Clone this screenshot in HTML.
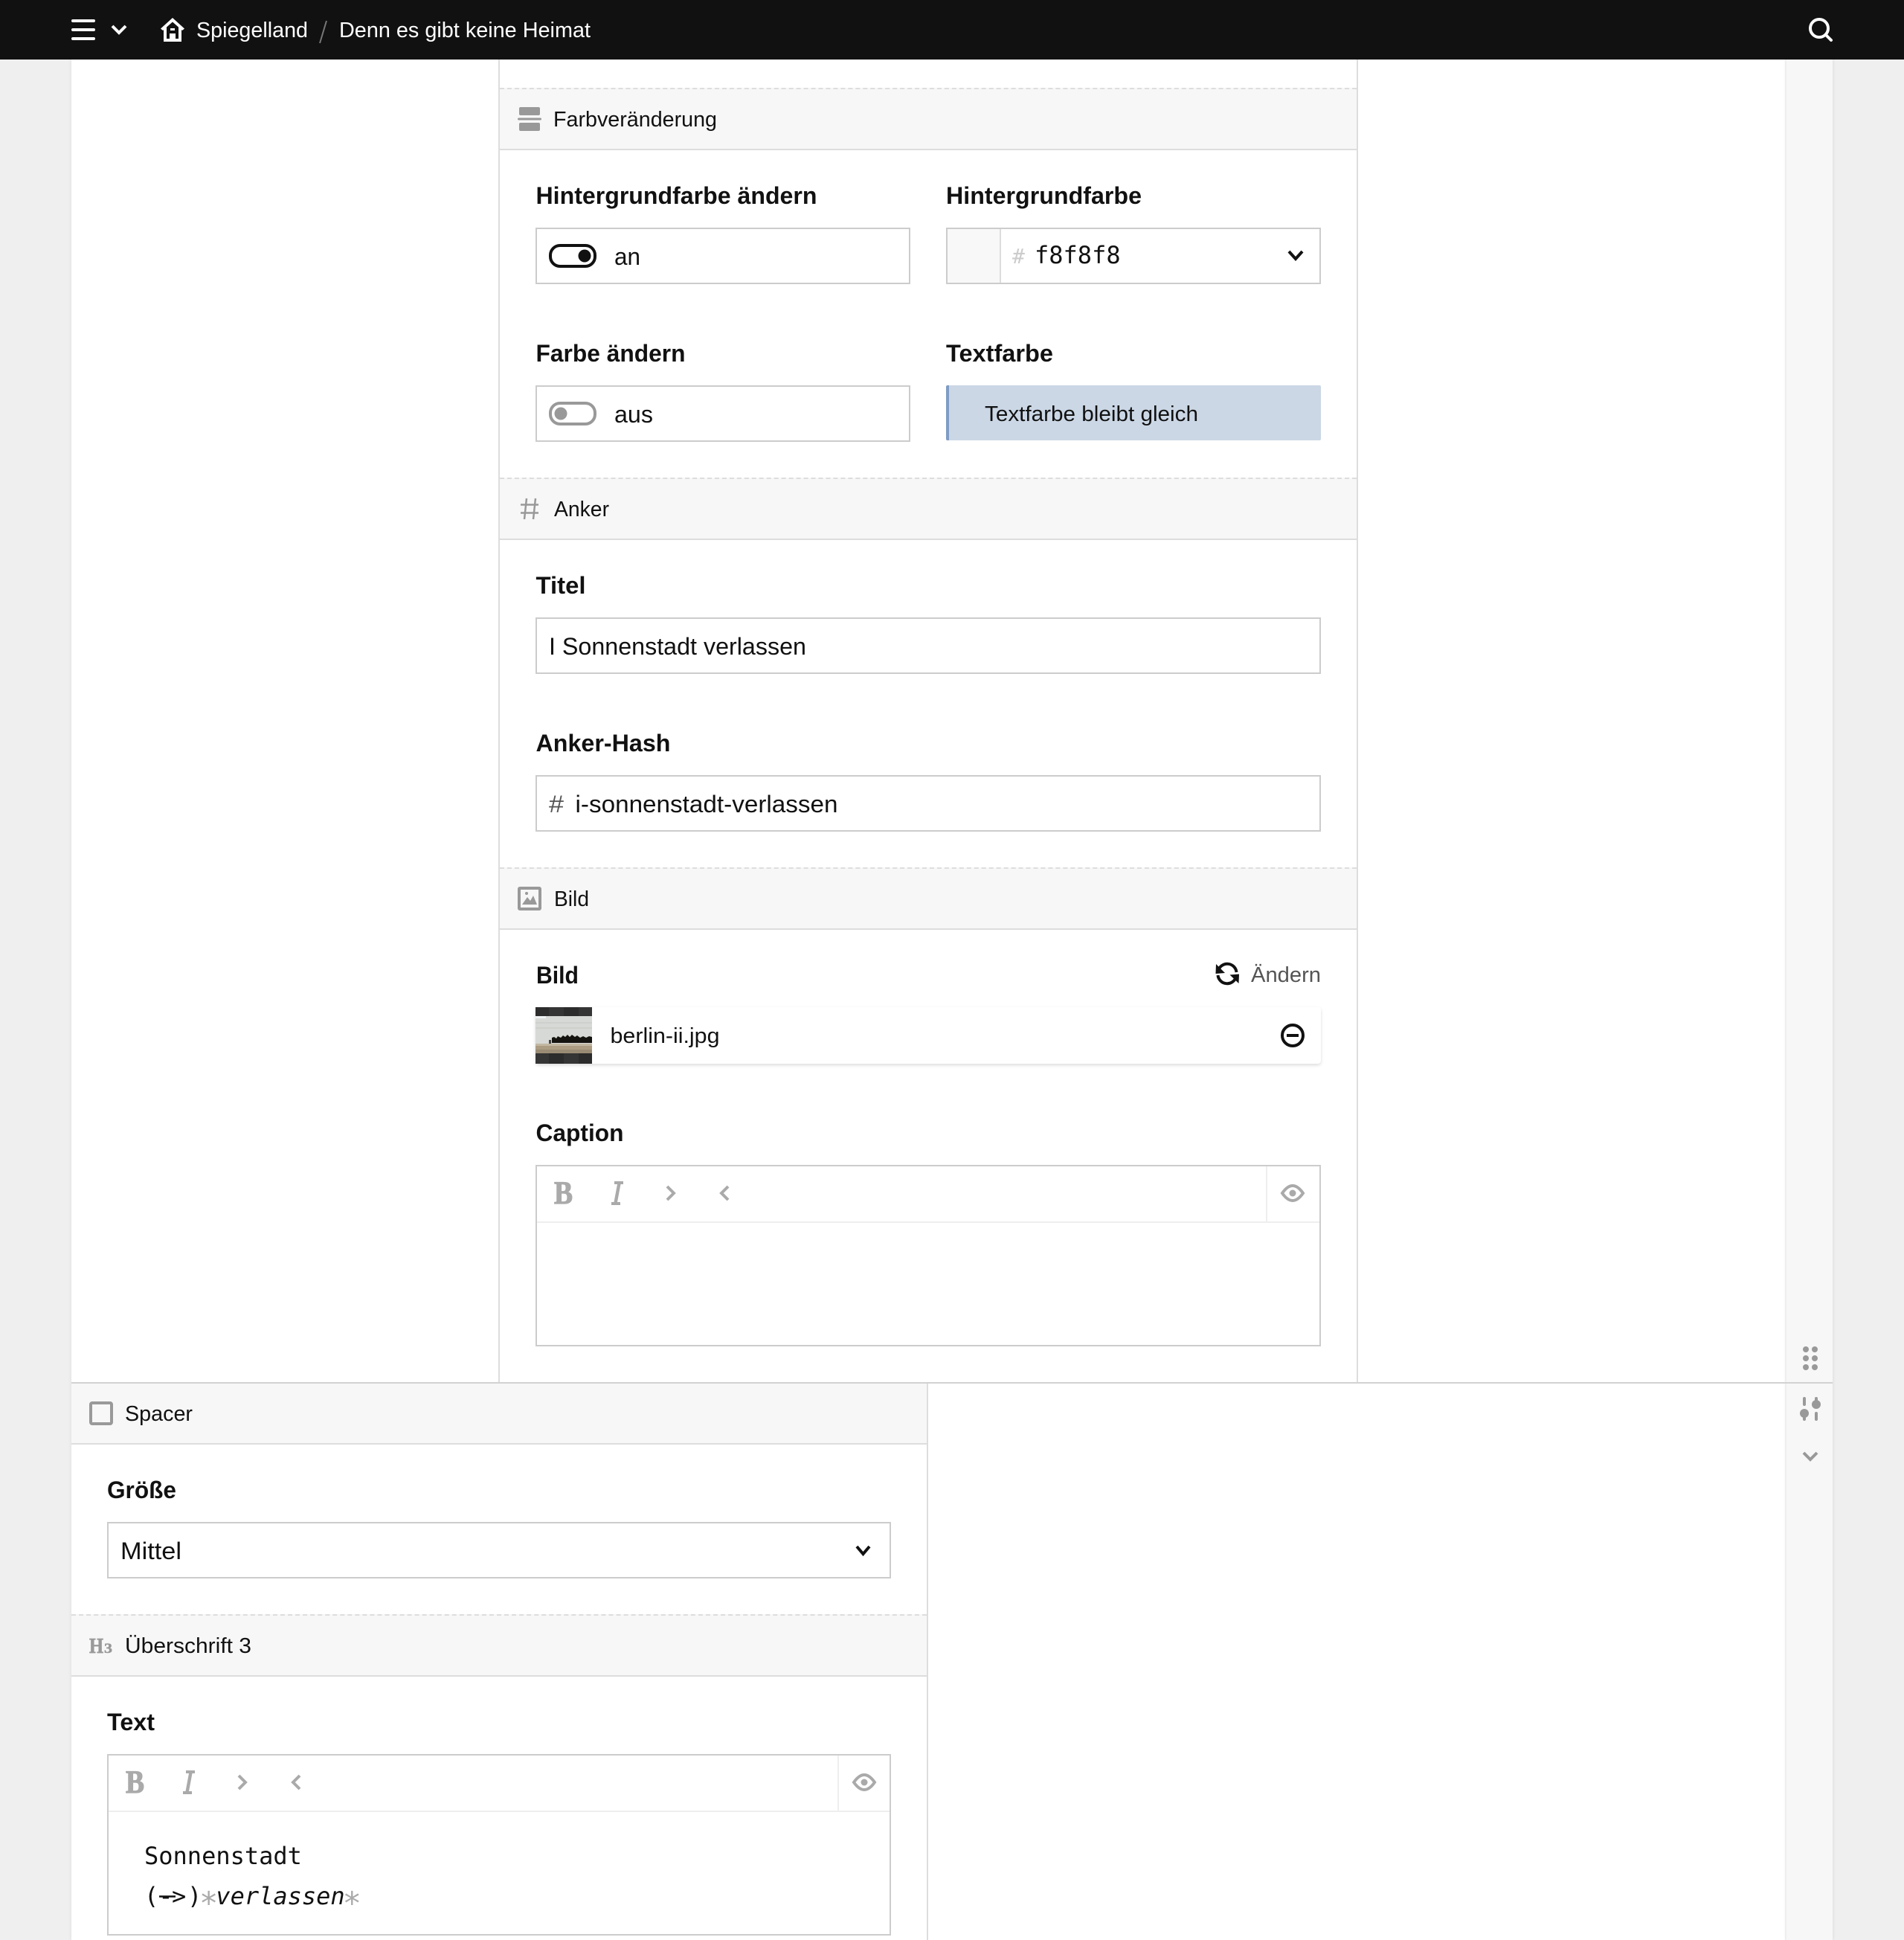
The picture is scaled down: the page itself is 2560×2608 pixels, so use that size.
<!DOCTYPE html>
<html lang="de"><head><meta charset="utf-8"><title>Spiegelland</title>
<style>
html,body{margin:0;padding:0;background:#efefef}
body{position:relative;width:2560px;height:2608px;overflow:hidden;font-family:"Liberation Sans",sans-serif}
.a{position:absolute;box-sizing:border-box}
.main{left:96px;top:80px;width:2304px;height:2528px;background:#fff;box-shadow:0 0 5px rgba(0,0,0,.08)}
.strip{left:2400px;top:80px;width:64px;height:2528px;background:#f7f7f7;border-left:2px solid #eee;box-shadow:1px 0 4px rgba(0,0,0,.07)}
.top{left:0;top:0;width:2560px;height:80px;background:#111}
.col{background:#ddd;width:2px}
.bar{height:84px;background:#f7f7f7;border-top:2px dashed #ddd;border-bottom:2px solid #ddd}
.box{height:76px;background:#fff;border:2px solid #ccc}
svg{position:absolute;left:0;top:0}
text{font-family:"Liberation Sans",sans-serif;fill:#111}
.l{font-size:32.5px;font-weight:700}
.v{font-size:32.5px}
.h{font-size:28.5px}
.m{font-family:"DejaVu Sans Mono",monospace;font-size:32px}
</style></head><body>
<div class="a main"></div>
<div class="a strip"></div>

<div class="a col" style="left:670px;top:80px;height:1778px"></div>
<div class="a col" style="left:1824px;top:80px;height:1778px"></div>
<div class="a col" style="left:1246px;top:1860px;height:748px"></div>
<div class="a" style="left:96px;top:1858px;width:2368px;height:2px;background:#d2d2d2"></div>

<div class="a bar" style="left:672px;top:118px;width:1152px"></div>
<div class="a bar" style="left:672px;top:642px;width:1152px"></div>
<div class="a bar" style="left:672px;top:1166px;width:1152px"></div>
<div class="a bar" style="left:96px;top:1860px;width:1150px;height:82px;border-top:0"></div>
<div class="a bar" style="left:96px;top:2170px;width:1150px"></div>

<div class="a box" style="left:720px;top:306px;width:504px"></div>
<div class="a box" style="left:1272px;top:306px;width:504px"></div>
<div class="a" style="left:1274px;top:308px;width:70px;height:72px;background:#f8f8f8;border-right:2px solid #ddd;box-sizing:content-box"></div>
<div class="a box" style="left:720px;top:518px;width:504px"></div>
<div class="a" style="left:1272px;top:518px;width:504px;height:74px;background:#cbd7e5;border-left:4px solid #7f9cc4;border-radius:2px"></div>
<div class="a box" style="left:720px;top:830px;width:1056px"></div>
<div class="a box" style="left:720px;top:1042px;width:1056px"></div>
<div class="a" style="left:720px;top:1354px;width:1056px;height:76px;background:#fff;border-radius:4px;box-shadow:0 2px 5px rgba(0,0,0,.14)"></div>
<div class="a box" style="left:720px;top:1566px;width:1056px;height:244px"></div>
<div class="a" style="left:722px;top:1642px;width:1052px;height:2px;background:#eee"></div>
<div class="a" style="left:1702px;top:1568px;width:2px;height:74px;background:#eee"></div>
<div class="a box" style="left:144px;top:2046px;width:1054px"></div>
<div class="a box" style="left:144px;top:2358px;width:1054px;height:244px"></div>
<div class="a" style="left:146px;top:2434px;width:1050px;height:2px;background:#eee"></div>
<div class="a" style="left:1126px;top:2360px;width:2px;height:74px;background:#eee"></div>

<div class="a top"></div>

<svg width="2560" height="2608" viewBox="0 0 2560 2608" xmlns="http://www.w3.org/2000/svg">
<!-- topbar -->
<g fill="#fff">
<rect x="96" y="26" width="32" height="4" rx="2"/><rect x="96" y="38" width="32" height="4" rx="2"/><rect x="96" y="50" width="32" height="4" rx="2"/>
<path fill-rule="evenodd" d="M232 24L248 38.500L245 41L244 40V56H220V40L219 41L216 38.500ZM232 29.500L224 36.500V52H228V45H236V52H240V36.500ZM229 38H235V41H229Z"/>
</g>
<path d="M151 35L160 44L169 35" fill="none" stroke="#fff" stroke-width="4"/>
<text class="h" x="264" y="50" textLength="150" lengthAdjust="spacingAndGlyphs" style="fill:#fff">Spiegelland</text>
<path d="M439 28L430 58" stroke="#777" stroke-width="2"/>
<text class="h" x="456" y="50" textLength="338" lengthAdjust="spacingAndGlyphs" style="fill:#fff">Denn es gibt keine Heimat</text>
<circle cx="2446" cy="38" r="12" fill="none" stroke="#fff" stroke-width="4"/>
<path d="M2456 48L2462 54" stroke="#fff" stroke-width="4" stroke-linecap="round"/>

<!-- section headers -->
<g fill="#999">
<rect x="698" y="144" width="28" height="11" rx="2"/><rect x="696" y="158.500" width="32" height="3" rx="1.500"/><rect x="698" y="165" width="28" height="11" rx="2"/>
</g>
<text class="h" x="744" y="170" textLength="220" lengthAdjust="spacingAndGlyphs">Farbveränderung</text>
<path d="M708 670L705 698M720 670L717 698M700 678.500H724M700 689.500H724" stroke="#999" stroke-width="2.500" fill="none"/>
<text class="h" x="745" y="694" textLength="74" lengthAdjust="spacingAndGlyphs">Anker</text>
<rect x="698" y="1194" width="28" height="28" rx="1" fill="none" stroke="#999" stroke-width="4"/>
<circle cx="708" cy="1201" r="2" fill="#999"/><path d="M702 1216L709 1206L713 1211L717 1204L722 1216Z" fill="#999"/>
<text class="h" x="745" y="1218" textLength="47" lengthAdjust="spacingAndGlyphs">Bild</text>
<rect x="122" y="1886" width="28" height="28" rx="2" fill="none" stroke="#999" stroke-width="4"/>
<text class="h" x="168" y="1910" textLength="91" lengthAdjust="spacingAndGlyphs">Spacer</text>
<text x="120" y="2222" font-size="29" font-weight="700" textLength="19" lengthAdjust="spacingAndGlyphs" style="font-family:'Liberation Serif',serif;fill:#999;stroke:#999;stroke-width:.7">H</text>
<text x="140" y="2222" font-size="19" font-weight="700" textLength="11" lengthAdjust="spacingAndGlyphs" style="font-family:'Liberation Serif',serif;fill:#999;stroke:#999;stroke-width:.5">3</text>
<text class="h" x="168" y="2222" textLength="170" lengthAdjust="spacingAndGlyphs">Überschrift 3</text>

<!-- labels -->
<text class="l" x="720.500" y="274" textLength="378" lengthAdjust="spacingAndGlyphs">Hintergrundfarbe ändern</text>
<text class="l" x="1272" y="274" textLength="263" lengthAdjust="spacingAndGlyphs">Hintergrundfarbe</text>
<text class="l" x="720.500" y="486" textLength="201" lengthAdjust="spacingAndGlyphs">Farbe ändern</text>
<text class="l" x="1272" y="486" textLength="144" lengthAdjust="spacingAndGlyphs">Textfarbe</text>
<text class="l" x="720.500" y="798" textLength="67" lengthAdjust="spacingAndGlyphs">Titel</text>
<text class="l" x="720.500" y="1010" textLength="181" lengthAdjust="spacingAndGlyphs">Anker-Hash</text>
<text class="l" x="721" y="1322" textLength="57" lengthAdjust="spacingAndGlyphs">Bild</text>
<text class="l" x="720.500" y="1534" textLength="118" lengthAdjust="spacingAndGlyphs">Caption</text>
<text class="l" x="144" y="2014" textLength="93" lengthAdjust="spacingAndGlyphs">Größe</text>
<text class="l" x="144" y="2326" textLength="64" lengthAdjust="spacingAndGlyphs">Text</text>

<!-- toggles -->
<rect x="740" y="330" width="60" height="28" rx="13" fill="#fff" stroke="#111" stroke-width="4"/>
<circle cx="786" cy="344" r="8.500" fill="#111"/>
<text class="v" x="826" y="356" textLength="35" lengthAdjust="spacingAndGlyphs">an</text>
<rect x="740" y="542" width="60" height="28" rx="13" fill="#fff" stroke="#999" stroke-width="4"/>
<circle cx="754" cy="556" r="8.500" fill="#999"/>
<text class="v" x="826" y="568" textLength="52" lengthAdjust="spacingAndGlyphs">aus</text>

<!-- color -->
<text x="1361" y="354" font-size="28" style="font-family:'DejaVu Sans Mono',monospace;fill:#ccc">#</text>
<text class="m" x="1391" y="354">f8f8f8</text>
<path d="M1733 338L1742 348L1751 338" fill="none" stroke="#111" stroke-width="4"/>
<text class="h" x="1324" y="566" textLength="287" lengthAdjust="spacingAndGlyphs">Textfarbe bleibt gleich</text>

<!-- values -->
<text class="v" x="738" y="880" textLength="346" lengthAdjust="spacingAndGlyphs">I Sonnenstadt verlassen</text>
<text class="v" x="738" y="1092" textLength="20" lengthAdjust="spacingAndGlyphs" style="fill:#555">#</text>
<text class="v" x="773.500" y="1092" textLength="353" lengthAdjust="spacingAndGlyphs">i-sonnenstadt-verlassen</text>

<!-- image card -->
<path d="M1638 1305A12.500 12.500 0 0 1 1662.500 1307" fill="none" stroke="#111" stroke-width="4"/>
<path d="M1635 1296L1634.500 1309L1647 1308Z" fill="#111"/>
<path d="M1637.500 1311A12.500 12.500 0 0 0 1662 1313" fill="none" stroke="#111" stroke-width="4"/>
<path d="M1665.500 1322L1666 1309.500L1653.500 1310.500Z" fill="#111"/>
<text class="h" x="1682" y="1320" textLength="94" lengthAdjust="spacingAndGlyphs" style="fill:#555">Ändern</text>
<rect x="720" y="1354" width="76" height="76" fill="#2c2c2c"/>
<rect x="738" y="1354" width="20" height="12" fill="#353535"/><rect x="778" y="1354" width="18" height="12" fill="#353535"/>
<rect x="720" y="1416" width="18" height="14" fill="#353535"/><rect x="758" y="1416" width="20" height="14" fill="#353535"/>
<rect x="720" y="1366" width="76" height="37" fill="#d6d9d5"/>
<rect x="720" y="1366" width="14" height="3" fill="#eef1f2"/>
<path d="M720 1375H796M720 1382H796" stroke="#c6c8c4" stroke-width="1"/>
<rect x="720" y="1403" width="76" height="13" fill="#ab9c82"/>
<rect x="720" y="1403" width="76" height="3" fill="#c2b8a2"/>
<rect x="720" y="1411" width="76" height="5" fill="#9a8c74"/>
<path d="M742 1402V1395L745 1394L748 1396L750 1393L754 1395L757 1392L760 1394L763 1391L766 1394L769 1391L773 1394L776 1392L780 1395L784 1393L788 1395L792 1393L796 1394V1402Z" fill="#15130f"/>
<rect x="738" y="1398" width="3" height="5" fill="#444"/>
<text class="h" x="820.500" y="1402" textLength="147" lengthAdjust="spacingAndGlyphs">berlin-ii.jpg</text>
<circle cx="1738" cy="1392" r="14" fill="none" stroke="#111" stroke-width="4"/>
<rect x="1730" y="1390" width="16" height="4" fill="#111"/>

<!-- caption toolbar -->
<g>
<text x="745" y="1618" font-size="43" font-weight="700" textLength="25" lengthAdjust="spacingAndGlyphs" style="font-family:'Liberation Serif',serif;fill:#aaa;stroke:#aaa;stroke-width:1.200">B</text>
<path d="M826 1588H838V1592H834.500L830 1616H834V1620H822V1616H825.500L830 1592H826Z" fill="#aaa"/>
<path d="M897 1595L906 1604L897 1613" fill="none" stroke="#aaa" stroke-width="4"/>
<path d="M979 1595L970 1604L979 1613" fill="none" stroke="#aaa" stroke-width="4"/>
<path d="M1724 1604Q1738 1584 1752 1604Q1738 1624 1724 1604Z" fill="none" stroke="#aaa" stroke-width="4"/>
<circle cx="1738" cy="1604" r="4.500" fill="#aaa"/>
</g>

<!-- strip icons -->
<g fill="#999">
<circle cx="2428" cy="1814" r="4"/><circle cx="2440" cy="1814" r="4"/><circle cx="2428" cy="1826" r="4"/><circle cx="2440" cy="1826" r="4"/><circle cx="2428" cy="1838" r="4"/><circle cx="2440" cy="1838" r="4"/>
<rect x="2424" y="1878" width="4" height="12" rx="2"/><circle cx="2426" cy="1900" r="6"/><rect x="2424" y="1900" width="4" height="10" rx="2"/>
<rect x="2440" y="1878" width="4" height="10" rx="2"/><circle cx="2442" cy="1888" r="6"/><rect x="2440" y="1898" width="4" height="12" rx="2"/>
</g>
<path d="M2425 1953L2434 1962L2443 1953" fill="none" stroke="#999" stroke-width="4"/>

<!-- lower select -->
<text class="v" x="162" y="2096" textLength="82" lengthAdjust="spacingAndGlyphs">Mittel</text>
<path d="M1152 2079L1160.500 2089L1169 2079" fill="none" stroke="#111" stroke-width="4"/>

<!-- text toolbar -->
<g transform="translate(-576,792)">
<text x="745" y="1618" font-size="43" font-weight="700" textLength="25" lengthAdjust="spacingAndGlyphs" style="font-family:'Liberation Serif',serif;fill:#aaa;stroke:#aaa;stroke-width:1.200">B</text>
<path d="M826 1588H838V1592H834.500L830 1616H834V1620H822V1616H825.500L830 1592H826Z" fill="#aaa"/>
<path d="M897 1595L906 1604L897 1613" fill="none" stroke="#aaa" stroke-width="4"/>
<path d="M979 1595L970 1604L979 1613" fill="none" stroke="#aaa" stroke-width="4"/>
<path d="M1724 1604Q1738 1584 1752 1604Q1738 1624 1724 1604Z" fill="none" stroke="#aaa" stroke-width="4"/>
<circle cx="1738" cy="1604" r="4.500" fill="#aaa"/>
</g>
<text class="m" x="194" y="2506">Sonnenstadt</text>
<text class="m" x="194" y="2560">(-<tspan x="231">&gt;</tspan><tspan x="252">)</tspan><tspan x="268" dy="13" font-size="42" style="fill:#aaa">*</tspan><tspan x="290.300" dy="-13" font-style="italic">verlassen</tspan><tspan x="460.600" dy="13" font-size="42" style="fill:#aaa">*</tspan></text>
<path d="M214 2549.500H236" stroke="#111" stroke-width="2.500"/>
</svg>
</body></html>
